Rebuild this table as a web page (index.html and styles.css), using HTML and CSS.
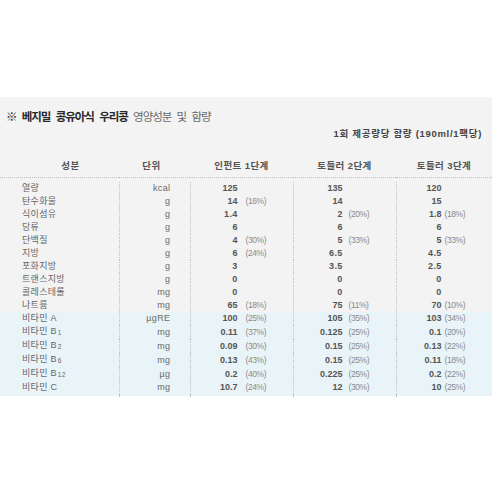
FILE: index.html
```html
<!DOCTYPE html>
<html lang="ko">
<head>
<meta charset="utf-8">
<link rel="stylesheet" href="styles.css">
</head>
<body>
<div class="top"></div>
<section class="panel">
  <h1 class="title"><span class="strong">※ 베지밀 콩유아식 우리콩</span> <span class="light">영양성분 및 함량</span></h1>
  <p class="serving">1회 제공량당 함량 (190ml/1팩당)</p>
  <table class="nut">
    <colgroup><col class="w0"><col class="w1"><col class="w2"><col class="w3"><col class="w4"></colgroup>
    <thead>
      <tr><th class="h0">성분</th><th class="h1">단위</th><th>인펀트 1단계</th><th>토들러 2단계</th><th>토들러 3단계</th></tr>
    </thead>
    <tbody>
      <tr class="gap"><td></td><td></td><td></td><td></td><td></td></tr>
      <tr><td class="n">열량</td><td class="u">kcal</td><td class="c"><span class="v">125</span></td><td class="c"><span class="v">135</span></td><td class="c"><span class="v">120</span></td></tr>
      <tr><td class="n">탄수화물</td><td class="u">g</td><td class="c"><span class="v">14</span><span class="p">(16%)</span></td><td class="c"><span class="v">14</span></td><td class="c"><span class="v">15</span></td></tr>
      <tr><td class="n">식이섬유</td><td class="u">g</td><td class="c"><span class="v l">1.4</span></td><td class="c"><span class="v">2</span><span class="p">(20%)</span></td><td class="c"><span class="v">1.8</span><span class="p">(18%)</span></td></tr>
      <tr><td class="n">당류</td><td class="u">g</td><td class="c"><span class="v">6</span></td><td class="c"><span class="v">6</span></td><td class="c"><span class="v">6</span></td></tr>
      <tr><td class="n">단백질</td><td class="u">g</td><td class="c"><span class="v">4</span><span class="p">(30%)</span></td><td class="c"><span class="v">5</span><span class="p">(33%)</span></td><td class="c"><span class="v">5</span><span class="p">(33%)</span></td></tr>
      <tr><td class="n">지방</td><td class="u">g</td><td class="c"><span class="v">6</span><span class="p">(24%)</span></td><td class="c"><span class="v l">6.5</span></td><td class="c"><span class="v l">4.5</span></td></tr>
      <tr><td class="n">포화지방</td><td class="u">g</td><td class="c"><span class="v l">3</span></td><td class="c"><span class="v l">3.5</span></td><td class="c"><span class="v l">2.5</span></td></tr>
      <tr><td class="n">트랜스지방</td><td class="u">g</td><td class="c"><span class="v l">0</span></td><td class="c"><span class="v l">0</span></td><td class="c"><span class="v l">0</span></td></tr>
      <tr><td class="n">콜레스테롤</td><td class="u">mg</td><td class="c"><span class="v l">0</span></td><td class="c"><span class="v l">0</span></td><td class="c"><span class="v l">0</span></td></tr>
      <tr><td class="n">나트륨</td><td class="u">mg</td><td class="c"><span class="v">65</span><span class="p">(18%)</span></td><td class="c"><span class="v">75</span><span class="p">(11%)</span></td><td class="c"><span class="v">70</span><span class="p">(10%)</span></td></tr>
      <tr class="vit"><td class="n">비타민 A</td><td class="u">µgRE</td><td class="c"><span class="v">100</span><span class="p">(25%)</span></td><td class="c"><span class="v">105</span><span class="p">(35%)</span></td><td class="c"><span class="v">103</span><span class="p">(34%)</span></td></tr>
      <tr class="vit"><td class="n">비타민 B<span class="sb">1</span></td><td class="u">mg</td><td class="c"><span class="v">0.11</span><span class="p">(37%)</span></td><td class="c"><span class="v">0.125</span><span class="p">(25%)</span></td><td class="c"><span class="v">0.1</span><span class="p">(20%)</span></td></tr>
      <tr class="vit"><td class="n">비타민 B<span class="sb">2</span></td><td class="u">mg</td><td class="c"><span class="v">0.09</span><span class="p">(30%)</span></td><td class="c"><span class="v">0.15</span><span class="p">(25%)</span></td><td class="c"><span class="v">0.13</span><span class="p">(22%)</span></td></tr>
      <tr class="vit"><td class="n">비타민 B<span class="sb">6</span></td><td class="u">mg</td><td class="c"><span class="v">0.13</span><span class="p">(43%)</span></td><td class="c"><span class="v">0.15</span><span class="p">(25%)</span></td><td class="c"><span class="v">0.11</span><span class="p">(18%)</span></td></tr>
      <tr class="vit"><td class="n">비타민 B<span class="sb">12</span></td><td class="u">µg</td><td class="c"><span class="v">0.2</span><span class="p">(40%)</span></td><td class="c"><span class="v">0.225</span><span class="p">(25%)</span></td><td class="c"><span class="v">0.2</span><span class="p">(22%)</span></td></tr>
      <tr class="vit"><td class="n">비타민 C</td><td class="u">mg</td><td class="c"><span class="v">10.7</span><span class="p">(24%)</span></td><td class="c"><span class="v">12</span><span class="p">(30%)</span></td><td class="c"><span class="v">10</span><span class="p">(25%)</span></td></tr>
      <tr class="vit end"><td></td><td></td><td></td><td></td><td></td></tr>
    </tbody>
  </table>
</section>
</body>
</html>
```

FILE: styles.css
```css
html, body {
  margin: 0;
  padding: 0;
  background: #ffffff;
}
body {
  width: 492px;
  height: 492px;
  overflow: hidden;
  font-family: "Liberation Sans", "Noto Sans CJK KR", sans-serif;
  color: #555;
}
.top {
  height: 97px;
}
.panel {
  background: #f3f3f3;
  padding-top: 13px;
}
.title {
  margin: 0 0 0 6px;
  font-size: 11.5px;
  line-height: 14px;
  letter-spacing: -1px;
  word-spacing: 3px;
  font-weight: normal;
}
.title .strong {
  font-weight: bold;
  color: #2a2a2a;
}
.title .light {
  color: #6a6a6a;
}
.serving {
  margin: 3px 10px 0 0;
  text-align: right;
  font-size: 9.5px;
  line-height: 14px;
  font-weight: bold;
  color: #444;
  letter-spacing: 0.7px;
}
.nut {
  margin-top: 12px;
  width: 492px;
  border-collapse: collapse;
  table-layout: fixed;
}
.w0 { width: 119px; }
.w1 { width: 71px; }
.w2 { width: 103px; }
.w3 { width: 103px; }
.w4 { width: 96px; }
.nut th {
  height: 24px;
  padding: 0;
  font-size: 9.5px;
  font-weight: bold;
  color: #555;
  letter-spacing: 0.4px;
  text-align: center;
  border-bottom: 1px dotted #bdbdbd;
}
.nut th.h0 { padding-left: 22px; }
.nut th.h1 { padding-right: 6px; }
.nut td {
  height: 13px;
  padding: 0;
  line-height: 13px;
  font-size: 9px;
  white-space: nowrap;
}
.nut td + td {
  border-left: 1px dotted #c4c4c4;
}
.nut tr.gap td {
  height: 4px;
  line-height: 4px;
  border-left: none;
}
.nut tr.end td {
  height: 2px;
  line-height: 2px;
}
.nut tr.vit {
  background: #e9f4f9;
}
.n {
  padding-left: 22px !important;
  color: #666;
  letter-spacing: 0.3px;
}
.sb {
  font-size: 6.5px;
  vertical-align: -1px;
  margin-left: 1px;
}
.u {
  text-align: right;
  padding-right: 19px !important;
  color: #6a6a6a;
  letter-spacing: 0.4px;
}
.v {
  display: inline-block;
  width: 47px;
  text-align: right;
  font-weight: bold;
  color: #555;
}
.v.l {
  letter-spacing: 0.3px;
}
.p {
  margin-left: 8px;
  font-size: 8.5px;
  letter-spacing: -0.4px;
  color: #8a8a8a;
}
td:nth-child(4) .v { width: 49px; }
td:nth-child(4) .p { margin-left: 6px; }
td:nth-child(5) .v { width: 45px; }
td:nth-child(5) .p { margin-left: 3px; }
```
